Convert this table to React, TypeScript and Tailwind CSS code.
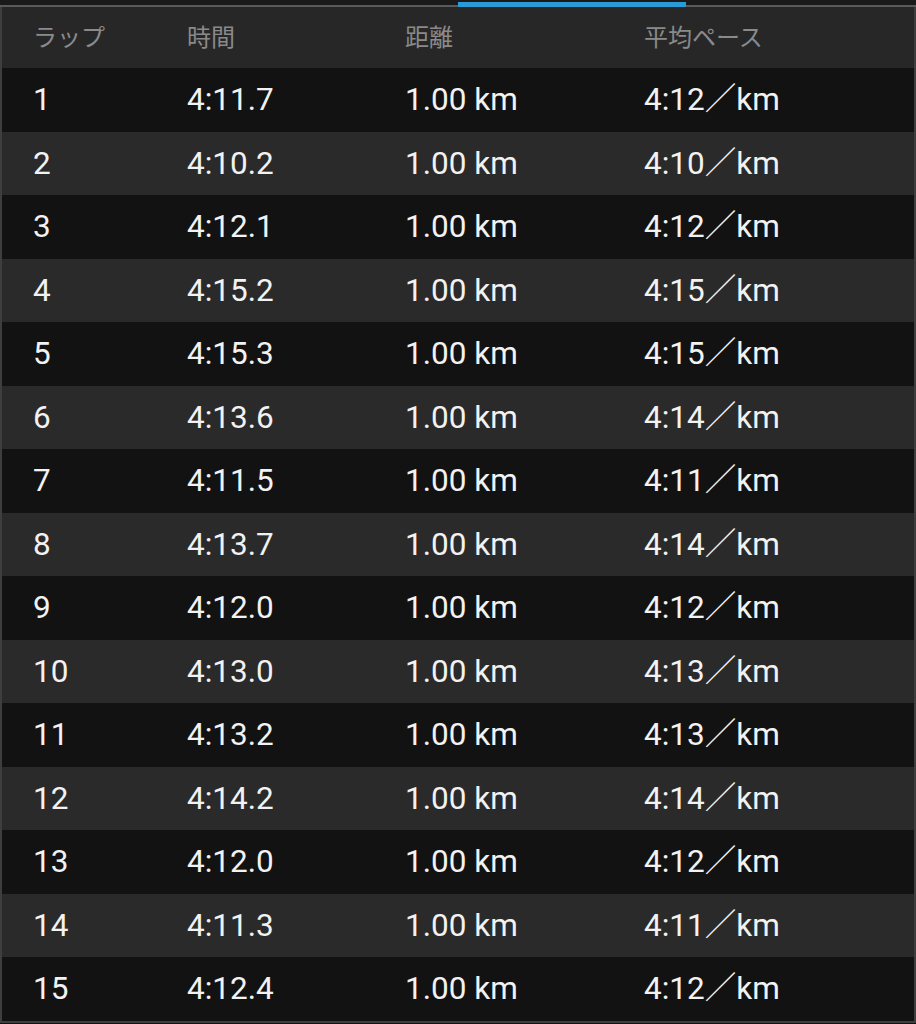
const laps = [
  ["4:11.7", "4:12"],
  ["4:10.2", "4:10"],
  ["4:12.1", "4:12"],
  ["4:15.2", "4:15"],
  ["4:15.3", "4:15"],
  ["4:13.6", "4:14"],
  ["4:11.5", "4:11"],
  ["4:13.7", "4:14"],
  ["4:12.0", "4:12"],
  ["4:13.0", "4:13"],
  ["4:13.2", "4:13"],
  ["4:14.2", "4:14"],
  ["4:12.0", "4:12"],
  ["4:11.3", "4:11"],
  ["4:12.4", "4:12"],
];

const cols = "grid grid-cols-[154px_218px_239px_1fr] items-center pl-[31px]";

export default function App() {
  return (
    <div
      className="h-[1024px] w-[916px] overflow-hidden bg-[#121212]"
      style={{ fontFamily: 'Roboto, "Noto Sans CJK JP", sans-serif' }}
    >
      <div className="relative h-[7px] border-b-2 border-[#5a5a5a] bg-[#1a1a1a]">
        <div className="absolute left-[458px] top-[2px] h-[5px] w-[228px] bg-[#2b9ad6]" />
      </div>
      <div className="border-x-2 border-b-2 border-[#3e3e3e]">
        <div className={`${cols} h-[61px] bg-[#272727] text-[24px] text-[#8a8a8a]`}>
          <span>ラップ</span>
          <span>時間</span>
          <span>距離</span>
          <span>平均ペース</span>
        </div>
        {laps.map(([time, pace], i) => (
          <div
            key={i}
            className={`${cols} h-[63.5px] text-[31.5px] text-[#f2f2f2] ${
              i % 2 === 0 ? "bg-[#121212]" : "bg-[#2a2a2a]"
            }`}
          >
            <span>{i + 1}</span>
            <span>{time}</span>
            <span>1.00 km</span>
            <span>{pace}／km</span>
          </div>
        ))}
      </div>
    </div>
  );
}
